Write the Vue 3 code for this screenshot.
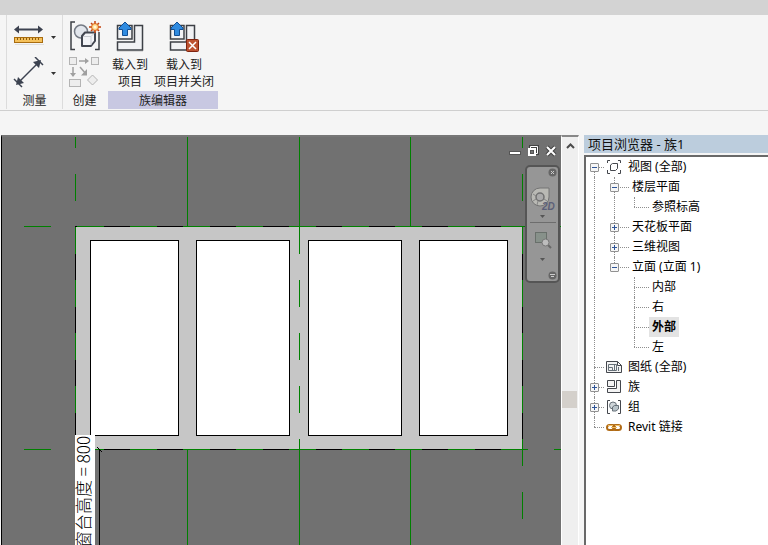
<script setup>
const panes = [
  { x: 90, w: 88 },
  { x: 196, w: 93 },
  { x: 308, w: 93 },
  { x: 419, w: 88 },
]

// g: how the guide line runs through the cell; box: expand or collapse toggle
const rows = [
  { text: '视图 (全部)', icon: 'view', cells: [{ g: 'first', box: '-' }] },
  { text: '楼层平面', cells: [{ g: 'v' }, { g: 'tee', box: '-' }] },
  { text: '参照标高', cells: [{ g: 'v' }, { g: 'v' }, { g: 'end' }] },
  { text: '天花板平面', cells: [{ g: 'v' }, { g: 'tee', box: '+' }] },
  { text: '三维视图', cells: [{ g: 'v' }, { g: 'tee', box: '+' }] },
  { text: '立面 (立面 1)', cells: [{ g: 'v' }, { g: 'end', box: '-' }] },
  { text: '内部', cells: [{ g: 'v' }, { g: 'blank' }, { g: 'tee' }] },
  { text: '右', cells: [{ g: 'v' }, { g: 'blank' }, { g: 'tee' }] },
  { text: '外部', active: true, cells: [{ g: 'v' }, { g: 'blank' }, { g: 'tee' }] },
  { text: '左', cells: [{ g: 'v' }, { g: 'blank' }, { g: 'end' }] },
  { text: '图纸 (全部)', icon: 'sheet', cells: [{ g: 'tee' }] },
  { text: '族', icon: 'family', cells: [{ g: 'tee', box: '+' }] },
  { text: '组', icon: 'group', cells: [{ g: 'tee', box: '+' }] },
  { text: 'Revit 链接', icon: 'link', cells: [{ g: 'end' }] },
]
</script>

<template>
  <div class="app">
    <div class="strip"></div>
    <header class="ribbon">
      <section class="group measure">
        <div class="tools">
          <button class="tool" aria-label="测量">
            <svg width="32" height="32" viewBox="0 0 32 32">
              <path d="M4 8.500H28" stroke="#3c4250" stroke-width="2" />
              <path d="M1 8.500L6 4.500V12.500ZM30 8.500L25 4.500V12.500Z" fill="#3c4250" />
              <rect x="1.500" y="16.500" width="28" height="5" fill="#f5c15b" stroke="#a86c10" />
              <path d="M4.500 17v2M7.500 17v2M10.500 17v2M13.500 17v2M16.500 17v2M19.500 17v2M22.500 17v2M25.500 17v2" stroke="#8b5a10" />
              <path d="M2 23.500H31" stroke="#dedede" />
            </svg>
            <svg class="drop" width="5" height="3" viewBox="0 0 5 3"><path d="M0 0H5L2.500 3Z" fill="#333" /></svg>
          </button>
          <button class="tool" aria-label="对齐标注">
            <svg width="32" height="32" viewBox="0 0 32 32">
              <path d="M6 25L25 6" stroke="#3c4250" stroke-width="1.500" />
              <path d="M3 28L5 20L11 26ZM28 3L20 5L26 11Z" fill="#3c4250" />
              <path d="M1 22L9 30M22 0L30 8" stroke="#3c4250" stroke-width="1.500" />
            </svg>
            <svg class="drop" width="5" height="3" viewBox="0 0 5 3"><path d="M0 0H5L2.500 3Z" fill="#333" /></svg>
          </button>
        </div>
        <h2>测量</h2>
      </section>
      <section class="group create">
        <div class="tools">
          <button class="tool" aria-label="创建组">
            <svg width="32" height="32" viewBox="0 0 32 32">
              <path d="M6 1H2V28.500H6M26 28.500H30V11" fill="none" stroke="#3d4046" stroke-width="1.500" />
              <circle cx="12" cy="10.500" r="6.500" fill="#e2e6ec" stroke="#747a84" stroke-width="1.500" />
              <path d="M13 15L16 11.500H26V20L22 25H13Z" fill="#f3f4f7" stroke="#424650" stroke-width="2" stroke-linejoin="round" />
              <path d="M14 15.500H22V24M22 15.500L25 12.500" fill="none" stroke="#c9ccd2" />
              <path d="M26 0V12M20 6H32M22 2L30 10M30 2L22 10" stroke="#c4410d" stroke-width="1.500" />
              <circle cx="26" cy="6" r="3.500" fill="#ffd98a" stroke="#d8601a" />
              <circle cx="26" cy="6" r="1.500" fill="#fff8e0" />
            </svg>
          </button>
          <button class="tool" aria-label="创建类似">
            <svg width="32" height="32" viewBox="0 0 32 32" fill="#ededed" stroke="#b4b4b4">
              <rect x=".5" y=".5" width="7" height="7" />
              <rect x="22.500" y=".5" width="7" height="7" />
              <rect x=".5" y="22.500" width="11" height="7" />
              <path d="M18.500 23L23.500 18L28.500 23L23.500 28Z" />
              <path d="M10 4H19M4 10V19M11 10L17 17" fill="none" stroke="#a0a0a0" stroke-width="1.500" />
              <path d="M16 1L20 4L16 7ZM1 16L4 20L7 16ZM18 12V18.500H12Z" fill="#a0a0a0" stroke="none" />
            </svg>
          </button>
        </div>
        <h2>创建</h2>
      </section>
      <section class="group editor">
        <div class="loaders">
          <button class="loader">
            <svg width="32" height="32" viewBox="0 0 32 32">
              <path d="M3.500 4.500H18V18H3.500ZM20.500 4.500H28.500V29H3.500V21H20.500Z" fill="#f1f2f4" stroke="#3d4046" stroke-width="1.500" />
              <path d="M3 30.500H29" stroke="#dadada" />
              <path d="M11 1L17 7V8.500H13.500V14.500H8.500V8.500H5V7Z" fill="#2f8be0" stroke="#124f94" />
            </svg>
            <span>载入到<br>项目</span>
          </button>
          <button class="loader">
            <svg width="32" height="32" viewBox="0 0 32 32">
              <path d="M2.500 4.500H16V18H2.500ZM18.500 4.500H26.500V29H2.500V21H18.500Z" fill="#f1f2f4" stroke="#3d4046" stroke-width="1.500" />
              <path d="M9 1L15 7V8.500H11.500V14.500H6.500V8.500H3V7Z" fill="#2f8be0" stroke="#124f94" />
              <rect x="18.500" y="18.500" width="12" height="12" rx="1" fill="#bd5230" stroke="#7e230f" />
              <path d="M21 21L28 28M28 21L21 28" stroke="#fff" stroke-width="1.500" />
            </svg>
            <span>载入到<br>项目并关闭</span>
          </button>
        </div>
        <h2>族编辑器</h2>
      </section>
    </header>
    <div class="options"></div>

    <div class="workspace">
      <main class="canvas">
        <svg class="drawing" width="100%" height="100%" aria-label="立面视图">
          <g transform="translate(-2 -137)" shape-rendering="crispEdges">
            <rect x="75" y="226" width="448" height="224" fill="#c6c6c6" />
            <path d="M75.500 226V450M522.500 226V450M76 226.500H523M76 449.500H523" stroke="#000" />
            <rect v-for="p in panes" :key="p.x" :x="p.x + 0.5" y="240.500" :width="p.w" height="195" fill="#fff" stroke="#000" />
            <g stroke="#008000">
              <path d="M24 226.500H562M24 449.500H562M75.500 121V519M522.500 121V545" stroke-dasharray="27 26" />
              <path d="M187.500 137V226M187.500 450V1600M410.500 137V226M410.500 450V1600M299.500 137V254M299.500 439V1600" />
              <path d="M299.500 280V413" stroke-dasharray="27 26" />
            </g>
            <rect x="75" y="435" width="20" height="1200" fill="#fff" />
            <path d="M99.500 449V1600M97 447L102 452" stroke="#000" fill="none" />
          </g>
          <text class="dimension" transform="translate(88 299) rotate(-90)" text-anchor="end">窗台高度 = 800</text>
        </svg>
        <div class="window-controls">
          <button aria-label="最小化"><svg width="12" height="12" viewBox="0 0 12 12"><rect x=".5" y="6.500" width="11" height="3" fill="#fff" stroke="#555" /></svg></button>
          <button aria-label="还原"><svg width="12" height="12" viewBox="0 0 12 12"><path d="M3.500 3V1.500H10.500V8.500H9" fill="none" stroke="#444" stroke-width="3" /><path d="M3.500 3V1.500H10.500V8.500H9" fill="none" stroke="#fff" /><rect x="1.500" y="3.500" width="7" height="7" fill="#fff" stroke="#fff" /><rect x="3.500" y="5.500" width="3" height="3" fill="#777" stroke="#555" /></svg></button>
          <button aria-label="关闭"><svg width="12" height="12" viewBox="0 0 12 12"><path d="M2 2L10 10M10 2L2 10" stroke="#444" stroke-width="4" /><path d="M2 2L10 10M10 2L2 10" stroke="#fff" stroke-width="2" /></svg></button>
        </div>
        <nav class="navbar" aria-label="导航栏">
          <button class="nav-close" aria-label="关闭导航栏"><svg width="9" height="9" viewBox="0 0 9 9"><circle cx="4.500" cy="4.500" r="4" fill="#666" /><path d="M3 3L6 6M6 3L3 6" stroke="#ccc" /></svg></button>
          <button class="nav-wheel" aria-label="二维控制盘">
            <svg width="26" height="26" viewBox="0 0 26 26">
              <path d="M10 3H19V12A9 9 0 1 1 10 3Z" fill="#b9b9b4" stroke="#747474" />
              <circle cx="10" cy="12" r="4" fill="#aaa" stroke="#707070" stroke-width="1.500" />
              <path d="M3 9L6 11M14 14L17 16M7 20L8 16M3 16L6 14" stroke="#858585" />
              <text x="12" y="25" class="two-d">2D</text>
            </svg>
          </button>
          <svg class="caret" width="5" height="3" viewBox="0 0 5 3"><path d="M0 0H5L2.500 3Z" fill="#555" /></svg>
          <hr>
          <button class="nav-zoom" aria-label="区域放大">
            <svg width="18" height="18" viewBox="0 0 18 18">
              <rect x="1.500" y="1.500" width="11" height="10" fill="#87918a" stroke="#69706b" />
              <path d="M13 13L17 17" stroke="#686868" stroke-width="2" />
              <circle cx="11.500" cy="11.500" r="3.500" fill="#bdbdbd" stroke="#777" />
            </svg>
          </button>
          <svg class="caret low" width="5" height="3" viewBox="0 0 5 3"><path d="M0 0H5L2.500 3Z" fill="#555" /></svg>
          <button class="nav-menu" aria-label="导航栏选项"><svg width="9" height="9" viewBox="0 0 9 9"><circle cx="4.500" cy="4.500" r="4" fill="#666" /><path d="M2 3.500H7M3 5.500H6" stroke="#ccc" /></svg></button>
        </nav>
      </main>
      <div class="scroller">
        <button aria-label="向上滚动"><svg width="9" height="6" viewBox="0 0 9 6"><path d="M1 5L4.500 1.500L8 5" fill="none" stroke="#4b4b4b" stroke-width="2" /></svg></button>
        <div class="thumb"></div>
      </div>
      <aside class="browser">
        <h1>项目浏览器 - 族1</h1>
        <ul class="tree">
          <li v-for="r in rows" :key="r.text">
            <span v-for="(c, i) in r.cells" :key="i" class="cell" :class="[c.g, { wide: i > 0 }]">
              <button v-if="c.box" class="box" :class="{ plus: c.box === '+' }" :aria-label="(c.box === '+' ? '展开 ' : '折叠 ') + r.text"></button>
            </span>
            <svg v-if="r.icon" class="icon" width="16" height="16" viewBox="0 0 16 16" fill="none" stroke="#44474d">
              <template v-if="r.icon === 'view'">
                <path d="M4 1.500H1.500V4M12 1.500H14.500V4M1.500 11V14.500H4M14.500 11V14.500H12" />
                <path d="M4.500 6L6.500 4.500H11.500V9.500L9.500 11.500H4.500Z" fill="#fff" />
              </template>
              <template v-else-if="r.icon === 'sheet'">
                <path d="M.5 2.500H11.500L15.500 6.500V13.500H.5ZM11.500 2.500V6.500H15.500" fill="#f3f3f3" />
                <path d="M2.500 5.500H10.500V11.500H2.500ZM2.500 8.500H6.500V11M8.500 6V11M12.500 8V12" stroke="#667078" />
              </template>
              <template v-else-if="r.icon === 'family'">
                <path d="M1.500 1.500H8.500V7.500H1.500ZM10.500 1.500H14.500V13.500H1.500V9.500H10.500Z" fill="#f4f4f4" />
              </template>
              <template v-else-if="r.icon === 'group'">
                <path d="M4 1.500H1.500V14.500H4M12 1.500H14.500V14.500H12" />
                <circle cx="7" cy="6.500" r="3.500" fill="#cfd6da" stroke="#667078" />
                <path d="M6.500 8L8.500 6.500H12.500V10L10 12H6.500Z" fill="#b9c4ca" stroke="#667078" />
              </template>
              <template v-else>
                <rect x="1" y="6" width="8" height="5" rx="2.500" stroke="#b06a14" stroke-width="2" />
                <rect x="7" y="6" width="8" height="5" rx="2.500" stroke="#b06a14" stroke-width="2" />
                <path d="M2 6.500H7M9 6.500H14M5 8.500H11" stroke="#f0bd62" />
              </template>
            </svg>
            <span class="label" :class="{ active: r.active }">{{ r.text }}</span>
          </li>
        </ul>
      </aside>
    </div>
  </div>
</template>

<style>
body { margin: 0; }
</style>

<style scoped>
.app {
  display: flex;
  flex-direction: column;
  height: 100vh;
  overflow: hidden;
  background: #f5f5f5;
  color: #222;
  font: 12px/16px "Noto Sans", "Noto Sans CJK SC", sans-serif;
}
button {
  display: flex;
  align-items: center;
  justify-content: center;
  margin: 0;
  padding: 0;
  border: 0;
  background: none;
  color: inherit;
  font: inherit;
}
svg { display: block; flex: none; }
h1, h2, ul { margin: 0; padding: 0; font-weight: 400; }
.strip { flex: none; height: 15px; background: #d3d3d3; }
.ribbon {
  display: flex;
  flex: none;
  height: 95px;
  padding-left: 6px;
  border-bottom: 1px solid #cfcfcf;
}
.group { display: flex; flex-direction: column; height: 94px; }
.group h2 {
  height: 18px;
  font-size: 12px;
  line-height: 20px;
  text-align: center;
}
.measure, .create { border-left: 1px solid #dcdcdc; }
.measure { width: 55px; }
.create { width: 43px; }
.editor { width: 110px; margin-left: 2px; }
.tools { display: flex; flex-direction: column; height: 76px; padding-top: 4px; box-sizing: border-box; }
.tool { height: 36px; }
.measure .tool { justify-content: flex-start; gap: 6px; padding-left: 6px; }
.loaders { display: flex; height: 76px; }
.loader {
  flex-direction: column;
  justify-content: flex-start;
  gap: 3px;
  padding-top: 6px;
  line-height: 17px;
  white-space: nowrap;
}
.loader:first-child { width: 44px; }
.loader:last-child { width: 64px; }
.editor h2 { background: #c8c8e2; }
.options { flex: none; height: 24px; }

.workspace { display: flex; flex: 1; min-height: 0; }
.canvas {
  position: relative;
  flex: 1;
  min-width: 0;
  overflow: hidden;
  background: #717171;
  border-top: 2px solid #777;
  border-left: 1px solid #000;
  margin-left: 1px;
}
.dimension { font: 300 17px "Noto Sans CJK SC", sans-serif; fill: #000; }
.window-controls { position: absolute; top: 8px; right: 4px; display: flex; gap: 6px; }
.navbar {
  position: absolute;
  top: 28px;
  right: 1px;
  display: flex;
  flex-direction: column;
  align-items: center;
  box-sizing: border-box;
  width: 35px;
  height: 118px;
  padding: 1px;
  border: 2px solid #555;
  border-radius: 5px;
  background: #969696;
}
.nav-close, .nav-menu { align-self: flex-end; }
.nav-wheel { margin-top: 8px; }
.two-d { font: italic 700 10px "Liberation Sans", sans-serif; fill: #5c6078; }
.caret { margin-top: 4px; }
.navbar hr { width: 26px; margin: 4px 0; border: 0; border-top: 1px solid #6d6d6d; }
.nav-zoom { margin-top: 4px; }
.low { margin-top: 9px; }
.nav-menu { margin-top: auto; }

.scroller {
  display: flex;
  flex: none;
  flex-direction: column;
  align-items: center;
  box-sizing: border-box;
  width: 18px;
  border-top: 2px solid #888;
  border-left: 1px solid #fff;
  border-right: 1px solid #fff;
  background: #efefef;
}
.scroller button { width: 16px; height: 18px; }
.thumb { width: 15px; height: 17px; margin-top: 236px; margin-right: 1px; background: #d4d0cb; }
.browser { display: flex; flex: 0 0 184px; flex-direction: column; gap: 2px; margin-left: 5px; }
.browser h1 {
  height: 18px;
  padding-left: 4px;
  background: #bccddd;
  font-size: 13px;
  line-height: 18px;
  color: #111;
}
.tree {
  flex: 1;
  min-height: 0;
  overflow: hidden;
  border-top: 2px solid #696969;
  border-left: 2px solid #696969;
  background: #fff;
  color: #000;
  list-style: none;
}
.tree li { display: flex; align-items: center; height: 20px; white-space: nowrap; }
.cell { position: relative; width: 20px; height: 20px; }
.cell::before, .cell::after { content: ""; position: absolute; left: 8px; }
.v::before, .tee::before { top: 0; height: 20px; border-left: 1px dotted #8f8f8f; }
.end::before { top: 0; height: 10px; border-left: 1px dotted #8f8f8f; }
.first::before { top: 10px; height: 10px; border-left: 1px dotted #8f8f8f; }
.tee::after, .end::after, .first::after { top: 10px; width: 10px; border-top: 1px dotted #8f8f8f; }
.wide.tee::after, .wide.end::after { width: 15px; }
.box {
  position: absolute;
  z-index: 1;
  top: 6px;
  left: 4px;
  width: 9px;
  height: 9px;
  border: 1px solid #919191;
  border-radius: 1px;
  background: linear-gradient(#2f5597, #2f5597) center / 5px 1px no-repeat, #f6f6f6;
}
.box.plus {
  background: linear-gradient(#2f5597, #2f5597) center / 5px 1px no-repeat,
    linear-gradient(#2f5597, #2f5597) center / 1px 5px no-repeat, #f6f6f6;
}
.label { margin-left: 3px; padding: 0 3px; line-height: 20px; }
.active { background: #e3e3e3; font-weight: 700; }
</style>
